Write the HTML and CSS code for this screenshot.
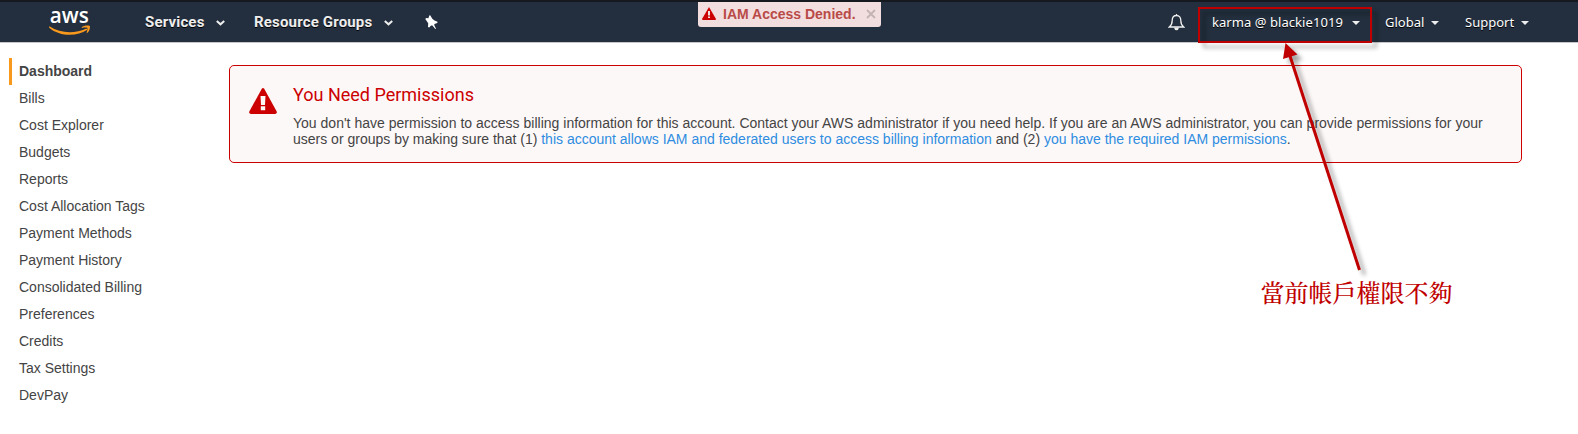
FILE: index.html
```
<!DOCTYPE html>
<html lang="en">
<head>
<meta charset="utf-8">
<title>Billing Management Console</title>
<link rel="stylesheet" href="styles.css">
</head>
<body>
<header class="nav">
  <svg class="logo" width="42" height="34" viewBox="0 -6 42 34">
    <text class="logo-text" x=".8" y="13.600" textLength="39" lengthAdjust="spacingAndGlyphs">aws</text>
    <path class="logo-smile" d="M.8 17.600C11 24.500 26 25 37 19.800C38 19.400 38.800 20.300 37.900 21C28 28 10 27.500 .3 18.700C-.3 18 .1 17.300 .8 17.600Z"/>
    <path class="logo-smile" d="M32.600 18.200C34.500 16.300 39.200 16 40.900 16.900C41.400 19.600 39.900 23 37.900 24.300C37.200 24.600 38.900 20.300 38.400 18.900C37.300 18.300 34.700 18.700 33 18.900Z"/>
  </svg>
  <a class="menu services">Services<svg class="chev" width="9" height="6" viewBox="0 0 9 6"><path d="M.8 1L4.5 4.3L8.200 1"/></svg></a>
  <a class="menu groups">Resource Groups<svg class="chev" width="9" height="6" viewBox="0 0 9 6"><path d="M.8 1L4.5 4.3L8.200 1"/></svg></a>
  <svg class="pin" width="13" height="15" viewBox="0 0 13 15"><path d="M5.200.3L7.300 3.800L9.500 5.600L12.500 6.800L12.300 8L9.400 8.900L9.300 10.200L11 13.700L10.300 14L7.400 10.600L6 10.400L4.200 12.500L3 12L3.200 8.200L.3 4L1.200 3L3.400 3.200L4.300.4Z"/></svg>
  <div class="toast">
    <svg class="toast-icon" width="14" height="13" viewBox="0 0 28 26"><path class="warn" d="M14 0L28 24Q28 26 26 26H2Q0 26 0 24Z"/><path class="mark-soft" d="M12 8h4v9h-4zM12 19h4v3h-4z"/></svg>
    <span class="toast-text">IAM Access Denied.</span>
    <svg class="close" width="10" height="10" viewBox="0 0 10 10"><path d="M1 1L9 9M9 1L1 9"/></svg>
  </div>
  <div class="right">
    <svg class="bell" width="17" height="18" viewBox="0 0 17 18"><path d="M8.500 1V2.500M8.500 2.500C5.600 2.500 4.200 4.500 4.200 7.500C4.200 11 3.200 12.500 1.300 14H15.700C13.800 12.500 12.800 11 12.800 7.500C12.800 4.500 11.400 2.500 8.500 2.500Z"/><path class="clapper" d="M6 14.500H11Q10.500 17.300 8.500 17.300T6 14.500Z"/></svg>
    <a class="acct user">karma @ blackie1019</a><i class="caret"></i>
    <a class="acct global">Global</a><i class="caret"></i>
    <a class="acct support">Support</a><i class="caret"></i>
  </div>
</header>
<main class="page">
  <nav class="side">
    <a class="item active">Dashboard</a>
    <a class="item">Bills</a>
    <a class="item">Cost Explorer</a>
    <a class="item">Budgets</a>
    <a class="item">Reports</a>
    <a class="item">Cost Allocation Tags</a>
    <a class="item">Payment Methods</a>
    <a class="item">Payment History</a>
    <a class="item">Consolidated Billing</a>
    <a class="item">Preferences</a>
    <a class="item">Credits</a>
    <a class="item">Tax Settings</a>
    <a class="item">DevPay</a>
  </nav>
  <section class="alert">
    <svg class="alert-icon" width="28" height="26" viewBox="0 0 28 26"><path class="warn" d="M12.800.8Q14-.6 15.200.8L27.700 23.500Q28.200 26 26 26H2Q-.2 26 .3 23.500Z"/><path class="mark" d="M11.500 8h5l-.5 9h-4zM11.800 18.300h4.400v4h-4.400z"/></svg>
    <div>
      <h1 class="title">You Need Permissions</h1>
      <p class="copy"><span class="first">You don't have permission to access billing information for this account. Contact your AWS administrator if you need help. If you are an AWS administrator, you can provide permissions for your</span><br>users or groups by making sure that (1) <a class="link">this account allows IAM and federated users to access billing information</a> and (2) <a class="link">you have the required IAM permissions</a>.</p>
    </div>
  </section>
</main>
<svg class="notes" width="1578" height="434" viewBox="0 0 1578 434">
  <g class="drawn">
    <rect class="frame" x="1199" y="8" width="172" height="34"/>
    <path class="shaft" d="M1290 56L1359.500 270"/>
    <path class="head" d="M1285.500 43L1297.500 54.500L1283 59Z"/>
  </g>
  <text class="note" x="1260.500" y="301.500" textLength="192">當前帳戶權限不夠</text>
</svg>
</body>
</html>
```
FILE: styles.css
```
body {
  margin: 0;
  background: #fff;
  color: #444;
  font-family: "Liberation Sans", Arial, sans-serif;
  font-size: 14px;
  overflow: hidden;
}
svg { flex: none; }
.nav {
  display: flex;
  height: 40px;
  border-top: 2px solid #16191f;
  border-bottom: 1px solid #c5c7cb;
  background: #232f3e;
  color: #fff;
}
.logo { margin: 1px 0 0 49px; overflow: visible; }
.logo-text { font: 600 21.5px/1 "Open Sans", sans-serif; fill: #fff; }
.logo-smile { fill: #f8991d; }
.menu {
  display: flex;
  align-items: center;
  height: 40px;
  font: 700 15px Roboto, sans-serif;
  letter-spacing: .17px;
  color: #eee;
  text-shadow: 0 1px 0 #000;
}
.services { width: 80px; margin-left: 54px; }
.groups { width: 139px; margin-left: 29px; }
.chev { margin: 2px 0 0 auto; }
.chev path { fill: none; stroke: #eee; stroke-width: 2; }
.pin { margin: 13px 0 0 32px; fill: #fff; }
.toast {
  box-sizing: border-box;
  display: flex;
  align-items: center;
  width: 183px;
  height: 25px;
  margin-left: 260px;
  padding: 0 5px 1px 4px;
  border-radius: 0 0 3px 3px;
  background: #f2dede;
  color: #b94a48;
  font-weight: 700;
}
.toast-icon { margin-top: -2px; }
.toast-text { margin-left: 7px; white-space: nowrap; }
.close { margin-left: auto; }
.close path { stroke: #c3b3b3; stroke-width: 1.8; }
.warn { fill: #c00; }
.mark { fill: #fdf8f8; }
.mark-soft { fill: #f2dede; }
.right {
  display: flex;
  align-items: center;
  margin-left: 287px;
  height: 40px;
  font: 13px "Noto Sans", sans-serif;
}
.bell path { fill: none; stroke: #eee; stroke-width: 1.3; }
.bell .clapper { fill: #eee; stroke: none; }
.acct { white-space: nowrap; text-shadow: 0 1px 0 #000; }
.user { width: 132px; margin-left: 27px; letter-spacing: .06px; }
.global { width: 38px; margin-left: 25px; }
.support { width: 48px; margin-left: 26px; }
.caret {
  width: 0;
  margin: 2px 0 0 8px;
  border: 4px solid transparent;
  border-top-color: #eee;
  border-bottom-width: 0;
}
.page { display: flex; align-items: flex-start; padding-top: 15px; }
.side { width: 220px; padding-left: 9px; }
.item {
  display: block;
  height: 27px;
  padding-left: 7px;
  border-left: 3px solid transparent;
  line-height: 27px;
}
.active { border-left-color: #f8991d; font-weight: 700; }
.alert {
  box-sizing: border-box;
  display: flex;
  width: 1293px;
  height: 98px;
  margin-top: 7px;
  padding: 22px 19px;
  border: 1px solid #c00;
  border-radius: 5px;
  background: #fdf8f8;
}
.alert-icon { margin: 0 16px 0 0; }
.title {
  margin: -5px 0 0;
  color: #c00;
  font: 400 18px/24px Roboto, sans-serif;
}
.copy { margin: 8px 0 0; line-height: 16px; white-space: nowrap; }
.first { word-spacing: .06px; }
.link { color: #2e8de0; }
.notes { position: absolute; top: 0; left: 0; pointer-events: none; }
.drawn { filter: drop-shadow(5px 5px 2px rgba(0, 0, 0, .35)); }
.frame { fill: none; stroke: #c00000; stroke-width: 2; }
.shaft { stroke: #c00000; stroke-width: 3; }
.head { fill: #c00000; }
.note { font: 500 24px "Noto Serif CJK TC", "Noto Sans CJK TC", serif; fill: #c00000; }
```
